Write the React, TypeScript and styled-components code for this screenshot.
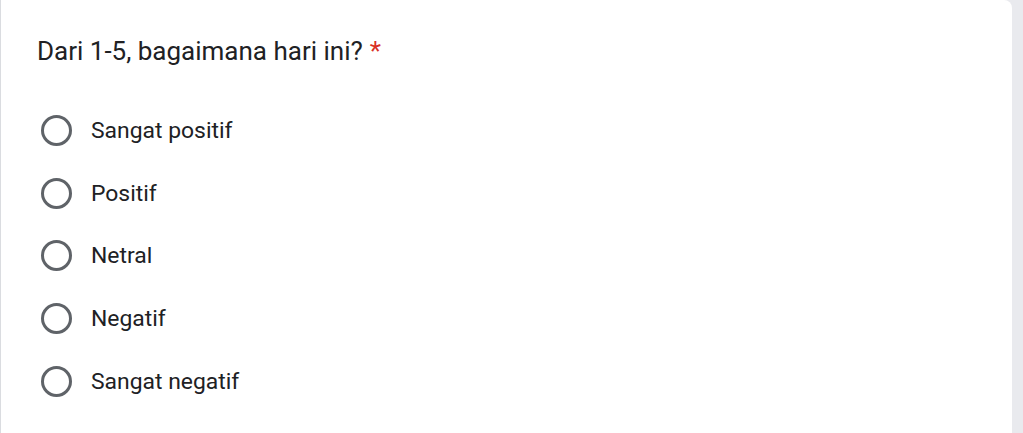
import React, { FC } from 'react';
import styled, { createGlobalStyle } from 'styled-components';

const GlobalStyle = createGlobalStyle`
  html, body {
    margin: 0;
    padding: 0;
    background: #e9eaee;
    font-family: Roboto, "Liberation Sans", Arial, sans-serif;
    overflow: hidden;
  }
`;

const Card = styled.div`
  box-sizing: border-box;
  width: 1012px;
  height: 100vh;
  background: #fff;
  border-left: 1px solid #dadce0;
  border-top-right-radius: 8px;
  padding: 32px 0 0 36px;
`;

const Title = styled.div`
  font-size: 26px;
  line-height: 38px;
  color: #202124;
  margin-bottom: 29px;
`;

const Required = styled.span`
  color: #d93025;
  margin-left: 7px;
`;

const OptionList = styled.div`
  display: flex;
  flex-direction: column;
`;

const Option = styled.label`
  display: flex;
  align-items: center;
  height: 62.7px;
  cursor: pointer;
`;

const Radio = styled.span`
  box-sizing: border-box;
  width: 31px;
  height: 31px;
  margin-left: 4px;
  border: 3px solid #5f6368;
  border-radius: 50%;
  flex: 0 0 auto;
`;

const Label = styled.span`
  margin-left: 19px;
  font-size: 22.9px;
  color: #202124;
`;

type OptionProps = { label: string };

const RadioOption: FC<OptionProps> = ({ label }) => (
  <Option>
    <Radio />
    <Label>{label}</Label>
  </Option>
);

const options = ['Sangat positif', 'Positif', 'Netral', 'Negatif', 'Sangat negatif'];

const App: FC = () => (
  <>
    <GlobalStyle />
    <Card>
      <Title>
        Dari 1-5, bagaimana hari ini?<Required>*</Required>
      </Title>
      <OptionList>
        {options.map((o) => (
          <RadioOption key={o} label={o} />
        ))}
      </OptionList>
    </Card>
  </>
);

export default App;
